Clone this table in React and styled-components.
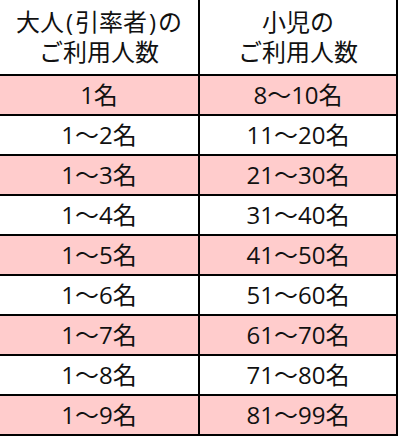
import { Fragment } from "react";
import styled, { createGlobalStyle } from "styled-components";

const GlobalStyle = createGlobalStyle`
  body {
    margin: 0;
    background: #fff;
    font-family: "Open Sans", "Noto Sans CJK JP", sans-serif;
    color: #111;
  }
`

const Table = styled.div`
  display: grid;
  grid-template-columns: 200px 198px;
  width: 398px;
`

const Cell = styled.div`
  display: flex;
  align-items: center;
  justify-content: center;
  text-align: center;
  height: ${p => p.head ? '74px' : '38px'};
  border-right: 2px solid #000;
  border-bottom: 2px solid #000;
  background: ${p => p.pink ? '#ffcccc' : '#fff'};
  font-size: 24px;
  line-height: ${p => p.head ? '30px' : '38px'};
  white-space: pre-line;
`

const Paren = styled.span`
  padding: 0 2px;
`

const rows = [
  ['1名', '8〜10名'],
  ['1〜2名', '11〜20名'],
  ['1〜3名', '21〜30名'],
  ['1〜4名', '31〜40名'],
  ['1〜5名', '41〜50名'],
  ['1〜6名', '51〜60名'],
  ['1〜7名', '61〜70名'],
  ['1〜8名', '71〜80名'],
  ['1〜9名', '81〜99名'],
]

export default function App() {
  return (
    <>
      <GlobalStyle />
      <Table>
        <Cell head>
          <span>
            大人<Paren>(</Paren>引率者<Paren>)</Paren>の<br />ご利用人数
          </span>
        </Cell>
        <Cell head>{'小児の\nご利用人数'}</Cell>
        {rows.map(([adult, child], i) => (
          <Fragment key={i}>
            <Cell pink={i % 2 === 0}>{adult}</Cell>
            <Cell pink={i % 2 === 0}>{child}</Cell>
          </Fragment>
        ))}
      </Table>
    </>
  )
}
